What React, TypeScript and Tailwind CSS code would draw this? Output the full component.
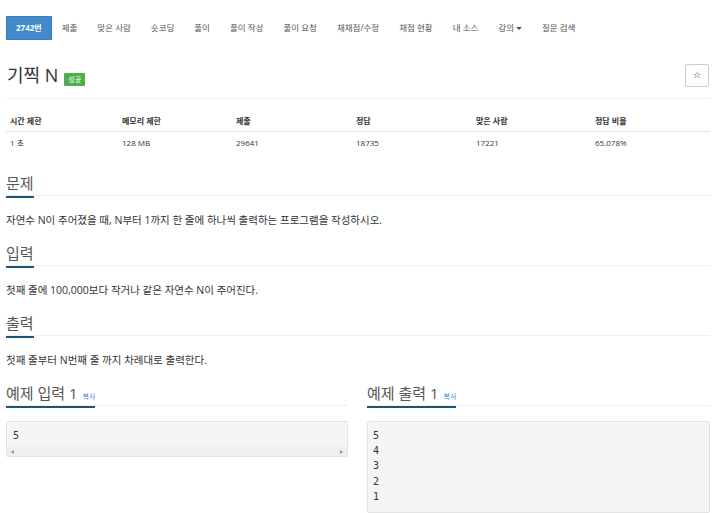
import React from 'react';

const navItems = ['제출', '맞은 사람', '숏코딩', '풀이', '풀이 작성', '풀이 요청', '채채점/수정', '채점 현황', '내 소스'];

const stats = [
    ['시간 제한', '1 초'],
    ['메모리 제한', '128 MB'],
    ['제출', '29641'],
    ['정답', '18735'],
    ['맞은 사람', '17221'],
    ['정답 비율', '65.078%'],
];

function Heading({ children }: { children: React.ReactNode }) {
    return (
        <div className="border-b border-[#eee] h-[25px]">
            <span className="inline-flex items-baseline h-[25px] pb-[3px] border-b-2 border-[#1c5572] text-[15px] leading-[20px] text-[#555]">
                {children}
            </span>
        </div>
    );
}

export default function App() {
    return (
        <div className="w-[720px] h-[513px] overflow-hidden bg-white pl-[6px] pr-[10px] font-['Open_Sans','Noto_Sans_CJK_KR',sans-serif] text-[#333]">
            {/* Nav */}
            <div className="pt-[16px] flex items-center h-[40px]">
                <div className="h-[24px] px-[9px] flex items-center bg-[#428bca] border border-[#3a7fbd] text-white text-[8px] font-bold">
                    2742번
                </div>
                {navItems.map(n => (
                    <div key={n} className="h-[24px] px-[10px] flex items-center text-[8.5px] text-[#555]">{n}</div>
                ))}
                <div className="h-[24px] px-[10px] flex items-center text-[8.5px] text-[#555]">
                    강의
                    <span className="inline-block ml-[2px] w-0 h-0 border-x-[3px] border-t-[3px] border-x-transparent border-t-[#555]" />
                </div>
                <div className="h-[24px] px-[10px] flex items-center text-[8.5px] text-[#555]">질문 검색</div>
            </div>

            {/* Title */}
            <div className="mt-[23px] pb-[10px] border-b border-[#eee] flex items-center justify-between">
                <div className="flex items-end h-[25px]">
                    <span className="text-[18px] leading-[25px] text-[#333] pl-[1px]">기찍 N</span>
                    <span className="ml-[6px] mb-[2px] h-[13px] px-[4px] bg-[#4cae4c] text-white text-[7px] leading-[13px] rounded-[1px]">성공</span>
                </div>
                <button className="w-[24px] h-[23px] mr-[1px] border border-[#ccc] rounded-[2px] flex items-center justify-center text-[9px] leading-none text-[#222] font-['DejaVu_Sans',sans-serif]">
                    ☆
                </button>
            </div>

            {/* Stats table */}
            <div className="mt-[11px] text-[8px]">
                <div className="grid grid-cols-[112px_114px_120px_120px_119px_1fr] h-[22px] items-center border-b border-[#e3e3e3] font-bold">
                    {stats.map(s => <div key={s[0]} className="pl-[4px]">{s[0]}</div>)}
                </div>
                <div className="grid grid-cols-[112px_114px_120px_120px_119px_1fr] h-[22px] items-center">
                    {stats.map(s => <div key={s[0]} className="pl-[4px]">{s[1]}</div>)}
                </div>
            </div>

            {/* 문제 */}
            <div className="mt-[17px]">
                <Heading>문제</Heading>
                <p className="mt-[16px] text-[10.5px] leading-[16px]">자연수 N이 주어졌을 때, N부터 1까지 한 줄에 하나씩 출력하는 프로그램을 작성하시오.</p>
            </div>

            {/* 입력 */}
            <div className="mt-[13px]">
                <Heading>입력</Heading>
                <p className="mt-[16px] text-[10.5px] leading-[16px]">첫째 줄에 100,000보다 작거나 같은 자연수 N이 주어진다.</p>
            </div>

            {/* 출력 */}
            <div className="mt-[13px]">
                <Heading>출력</Heading>
                <p className="mt-[16px] text-[10.5px] leading-[16px]">첫째 줄부터 N번째 줄 까지 차례대로 출력한다.</p>
            </div>

            {/* 예제 */}
            <div className="mt-[13px] grid grid-cols-[342px_1fr] gap-x-[19px]">
                <div>
                    <Heading>
                        예제 입력 1<span className="ml-[5px] text-[7px] text-[#428bca]">복사</span>
                    </Heading>
                    <div className="mt-[15px] bg-[#f5f5f5] border border-[#e3e3e3] rounded-[2px]">
                        <div className="pt-[6px] px-[6px] font-['DejaVu_Sans_Mono',monospace] text-[10px] leading-[15px]">5</div>
                        <div className="mt-[4px] h-[9px] bg-[#efefef] flex items-center justify-between px-[4px]">
                            <svg width="3" height="4" viewBox="0 0 3 4"><path d="M3 0 L0 2 L3 4 Z" fill="#999" /></svg>
                            <svg width="3" height="4" viewBox="0 0 3 4"><path d="M0 0 L3 2 L0 4 Z" fill="#999" /></svg>
                        </div>
                    </div>
                </div>
                <div>
                    <Heading>
                        예제 출력 1<span className="ml-[5px] text-[7px] text-[#428bca]">복사</span>
                    </Heading>
                    <div className="mt-[15px] bg-[#f5f5f5] border border-[#e3e3e3] rounded-[2px] pt-[6px] pb-[8px] px-[5px] font-['DejaVu_Sans_Mono',monospace] text-[10px] leading-[15.2px]">
                        {['5', '4', '3', '2', '1'].map(l => <div key={l}>{l}</div>)}
                    </div>
                </div>
            </div>
        </div>
    );
}
